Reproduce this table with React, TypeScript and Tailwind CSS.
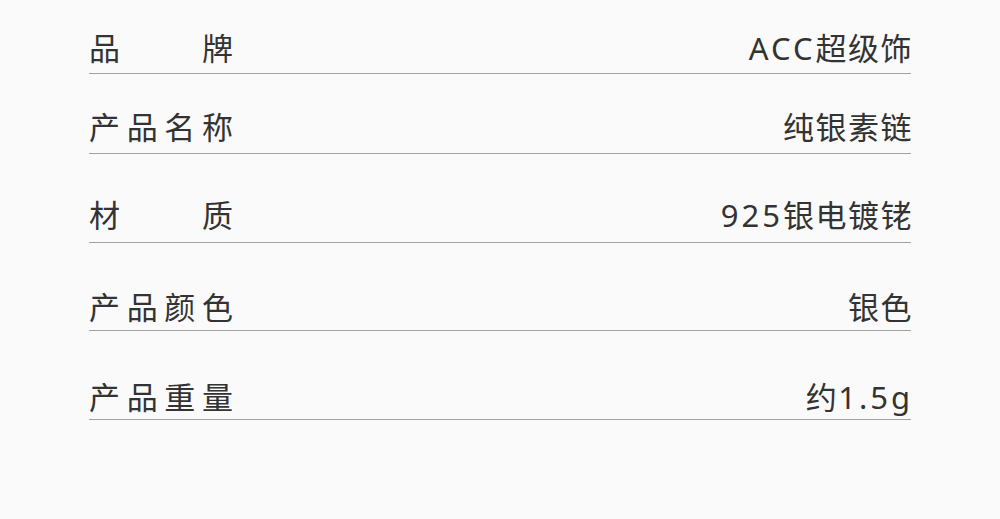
const specs = [
  { label: "品牌", value: "ACC超级饰", row: "pt-[33px] pb-[10px]" },
  { label: "产品名称", value: "纯银素链", row: "pt-[38px] pb-[11px]" },
  { label: "材质", value: "925银电镀铑", row: "pt-[46px] pb-[12px]" },
  { label: "产品颜色", value: "银色", row: "pt-[49px] pb-[8px]" },
  { label: "产品重量", value: "约1.5g", row: "pt-[51px] pb-[7px]" },
];

// latin runs are set a little wider than the CJK text
const Value = ({ text }: { text: string }) => {
  const parts = text.split(/([A-Za-z0-9.]+)/).filter(Boolean);
  return (
    <div className="tracking-[1.5px] -mr-[2px]">
      {parts.map((p, i) =>
        /[A-Za-z0-9]/.test(p) ? (
          <span key={i} className="tracking-[3px]">
            {p}
          </span>
        ) : (
          <span key={i}>{p}</span>
        )
      )}
    </div>
  );
};

const App = () => {
  return (
    <div className="w-[1000px] h-[519px] bg-[#fafafa] px-[89px] font-['Noto_Sans','Noto_Sans_CJK_SC',sans-serif] text-[#333333] text-[31px] leading-[30px]">
      {specs.map((item) => (
        <div
          key={item.label}
          className={`${item.row} flex justify-between items-center border-b border-[#a3a3a3]`}
        >
          <div className="w-[144px] [text-align-last:justify]">{item.label}</div>
          <Value text={item.value} />
        </div>
      ))}
    </div>
  );
};

export default App;
